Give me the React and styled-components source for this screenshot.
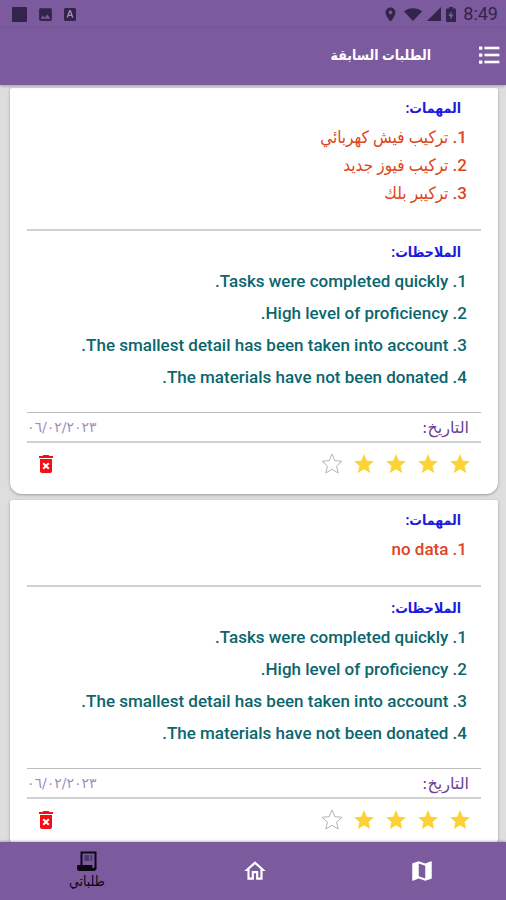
import { useState } from 'react';
import styled, { createGlobalStyle } from 'styled-components';
import { MdDeleteForever, MdImage, MdLocationOn, MdMap, MdOutlineHome } from 'react-icons/md';

const PURPLE = '#7b5a9e';
const STATUS = '#33244b';
const STAR_PATH = 'M12 17.27L18.18 21l-1.64-7.03L22 9.24l-7.19-.61L12 2 9.19 8.63 2 9.24l5.46 4.73L5.82 21z';

const GlobalStyle = createGlobalStyle`
* {
    box-sizing: border-box;
}
body {
    margin: 0;
    font-family: Roboto, "DejaVu Sans Condensed", "DejaVu Sans", sans-serif;
}
button {
    all: unset;
    cursor: pointer;
}
`

const Screen = styled.div`
height: 100vh;
display: flex;
flex-direction: column;
background: #dedede;
`

const StatusBar = styled.div`
height: 28px;
padding: 0 8px 0 12px;
display: flex;
align-items: center;
justify-content: space-between;
direction: ltr;
background: ${PURPLE};
color: ${STATUS};
`

const StatusGroup = styled.div`
display: flex;
align-items: center;
gap: ${props => props.$gap}px;
`

const Clock = styled.time`
padding-left: 2px;
font-size: 18px;
line-height: 28px;
`

const Header = styled.header`
height: 57px;
flex-shrink: 0;
padding: 0 6px 3px;
display: flex;
align-items: center;
gap: 48px;
background: ${PURPLE};
color: #fff;
box-shadow: 0 1px 3px rgba(0, 0, 0, 0.3);
z-index: 1;
`

const MenuButton = styled.button`
display: flex;
`

const Title = styled.h1`
margin: 0;
font-size: 14px;
line-height: 28px;
font-weight: 700;
`

const Main = styled.main`
flex: 1;
min-height: 0;
padding: 3px 8px 8px 10px;
display: flex;
flex-direction: column;
gap: 6px;
overflow-y: auto;
scrollbar-width: none;
`

const Card = styled.article`
flex-shrink: 0;
padding: 8px 17px 9px;
background: #fff;
border-radius: 2px 2px 12px 12px;
box-shadow: 0 1px 3px rgba(0, 0, 0, 0.3);
`

const Label = styled.h2`
margin: 0;
padding: 0 20px;
font-size: 14px;
line-height: 24px;
font-weight: 700;
color: #1a1ae0;
`

const List = styled.ol`
margin: 0;
padding: ${props => props.$notes ? '1px 14px 19px' : '3px 14px 22px'};
list-style: none;
font-size: 17px;
line-height: ${props => props.$notes ? 32 : 28}px;
font-weight: 500;
color: ${props => props.$notes ? '#0c666e' : '#dc4520'};
`

const Line = styled.hr`
margin: 0 0 ${props => props.$space || 0}px;
border: 0;
height: ${props => props.$thin ? 1 : 2}px;
background: ${props => props.$thin ? '#bdbdbd' : '#d0d0d0'};
`

const DateRow = styled.div`
height: 28px;
padding-right: 12px;
display: flex;
align-items: center;
justify-content: space-between;
font-family: "DejaVu Sans", sans-serif;
font-size: 16px;
color: #6a3f96;
`

const DateValue = styled.time`
font-size: 14px;
color: #9c8fbd;
`

const Footer = styled.div`
height: 42px;
padding: 0 9px 0 7px;
display: flex;
align-items: center;
justify-content: space-between;
`

const Stars = styled.div`
display: flex;
gap: 8px;
`

const StarButton = styled.button`
display: flex;
`

const DeleteButton = styled.button`
display: flex;
color: #f40d12;
`

const Nav = styled.nav`
height: 58px;
flex-shrink: 0;
padding-left: 3px;
display: grid;
grid-template-columns: repeat(3, 1fr);
background: ${PURPLE};
box-shadow: 0 -1px 2px rgba(0, 0, 0, 0.25);
z-index: 1;
`

const NavLink = styled.a`
display: flex;
flex-direction: column;
align-items: center;
justify-content: center;
color: ${props => props.$active ? '#0d0716' : '#fff'};
font-size: 14px;
line-height: 20px;
text-decoration: none;
`

const notes = [
    'Tasks were completed quickly.',
    'High level of proficiency.',
    'The smallest detail has been taken into account.',
    'The materials have not been donated.',
]

const orders = [
    { id: 1, tasks: ['تركيب فيش كهربائي', 'تركيب فيوز جديد', 'تركيبر بلك'], notes, date: '٠٦/٠٢/٢٠٢٣', rating: 4 },
    { id: 2, tasks: ['no data'], notes, date: '٠٦/٠٢/٢٠٢٣', rating: 4 },
]

function MenuIcon() {
    return (
        <svg width="21" height="18" viewBox="0 0 21 18" fill="currentColor">
            {[1, 8, 15].map(y => <g key={y}>
                <rect x="0" y={y - 0.5} width="3.4" height="3.2" rx="0.6" />
                <rect x="5.4" y={y - 0.3} width="15" height="2.6" />
            </g>)}
        </svg>
    )
}

function WifiIcon() {
    return (
        <svg width="18" height="13" viewBox="0 0 18 13" fill="currentColor">
            <path d="M0 3.4C5-.9 13-.9 18 3.4L9 13z" />
        </svg>
    )
}

function SignalIcon() {
    return (
        <svg width="14" height="14" viewBox="0 0 14 14" fill="currentColor">
            <path d="M14 0v14H0z" />
        </svg>
    )
}

function BatteryIcon() {
    return (
        <svg width="10" height="15" viewBox="0 0 10 15">
            <path fill="currentColor" d="M3 0h4v1.600h2.200c.5 0 .8.300.8.800v11.800c0 .5-.3.800-.8.800H.8c-.5 0-.8-.3-.8-.8V2.400c0-.5.3-.8.8-.8H3z" />
            <path fill={PURPLE} d="M5.600 4L2.400 9h2v3.800L7.600 7.800h-2z" />
        </svg>
    )
}

function KeyboardIcon() {
    return (
        <svg width="12" height="13" viewBox="0 0 12 13">
            <rect width="12" height="13" rx="1.500" fill="currentColor" />
            <path fill="none" stroke="#a48fc0" strokeWidth="1.300" d="M3.300 9.500L5.600 3h.8l2.300 6.500M4.200 7.400h3.600" />
        </svg>
    )
}

function OrdersIcon() {
    return (
        <svg width="20" height="20" viewBox="0 0 20 20">
            <path fill="none" stroke="currentColor" strokeWidth="2" d="M4.500 14V1.500h14V17" />
            <path fill="currentColor" d="M1.500 14h13.800v2c0 .8.500 1.200 1.100 1.200s1.100-.5 1.100-1.200h2v1.500c0 1.500-1.200 2.500-2.700 2.500H2.500C1 20 0 19 0 17.500v-2C0 14.600.6 14 1.500 14z" />
            <path stroke="currentColor" strokeWidth="1" opacity="0.8" d="M7.500 5h4.500M7.500 7h4.500M7.500 9h4.500M13.300 5h2M13.300 7h2M13.300 9h2" />
        </svg>
    )
}

function Star({ filled }) {
    return (
        <svg width="24" height="24" viewBox="0 0 24 24">
            <path d={STAR_PATH} fill={filled ? '#fdd235' : 'none'} stroke={filled ? 'none' : '#b4b4b4'} strokeWidth="1" />
        </svg>
    )
}

function OrderCard({ order, onDelete }) {
    const [rating, setRating] = useState(order.rating)

    return (
        <Card>
            <Label>المهمات:</Label>
            <List>
                {order.tasks.map((task, i) => <li key={task}>{i + 1}. {task}</li>)}
            </List>
            <Line $space={9} />
            <Label>الملاحظات:</Label>
            <List $notes>
                {order.notes.map((note, i) => <li key={note}>{i + 1}. {note}</li>)}
            </List>
            <Line $thin />
            <DateRow>
                <span>التاريخ:</span>
                <DateValue dateTime="2023-02-06">{order.date}</DateValue>
            </DateRow>
            <Line />
            <Footer>
                <Stars>
                    {[1, 2, 3, 4, 5].map(n => <StarButton key={n} aria-label={`${n}/5`} onClick={() => setRating(n)}>
                        <Star filled={n <= rating} />
                    </StarButton>)}
                </Stars>
                <DeleteButton aria-label="حذف" onClick={onDelete}><MdDeleteForever size={24} /></DeleteButton>
            </Footer>
        </Card>
    )
}

function App() {
    const [items, setItems] = useState(orders)

    return (
        <Screen dir="rtl" lang="ar">
            <GlobalStyle />
            <StatusBar>
                <StatusGroup $gap={10}>
                    <svg width="15" height="15"><rect width="15" height="15" rx="1" fill="currentColor" /></svg>
                    <MdImage size={17} />
                    <KeyboardIcon />
                </StatusGroup>
                <StatusGroup $gap={5}>
                    <MdLocationOn size={17} />
                    <WifiIcon />
                    <SignalIcon />
                    <BatteryIcon />
                    <Clock>8:49</Clock>
                </StatusGroup>
            </StatusBar>
            <Header>
                <MenuButton aria-label="القائمة"><MenuIcon /></MenuButton>
                <Title>الطلبات السابقة</Title>
            </Header>
            <Main>
                {items.map(order => <OrderCard
                    key={order.id}
                    order={order}
                    onDelete={() => setItems(items.filter(item => item.id !== order.id))}
                />)}
            </Main>
            <Nav>
                <NavLink href="#map" aria-label="الخريطة"><MdMap size={26} /></NavLink>
                <NavLink href="#home" aria-label="الرئيسية"><MdOutlineHome size={26} /></NavLink>
                <NavLink href="#orders" $active><OrdersIcon />طلباتي</NavLink>
            </Nav>
        </Screen>
    )
}

export default App
